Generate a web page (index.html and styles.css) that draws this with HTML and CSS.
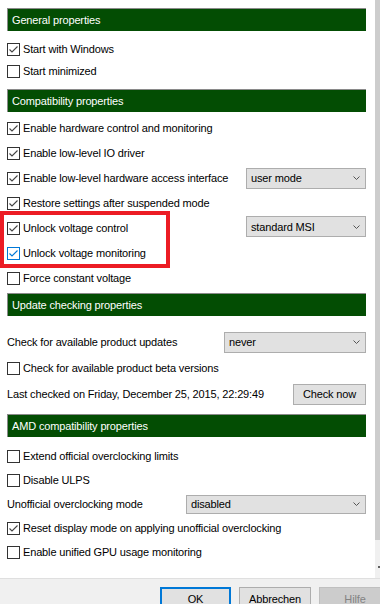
FILE: index.html
```html
<!DOCTYPE html>
<html lang="en">
<head>
    <meta charset="UTF-8">
    <meta name="viewport" content="width=device-width, initial-scale=1.0">
    <title>Properties</title>
    <link rel="stylesheet" href="styles.css">
</head>
<body>
    <div class="dialog">
        <div class="scroll-area">
            <div class="content">
                <div class="group-title">General properties</div>
                <div class="group group-general">
                    <div class="row"><span class="cb"><svg width="11" height="11" viewBox="0 0 11 11"><path d="M1.5 5.5 L4 8 L9.5 2.5" /></svg></span>Start with Windows</div>
                    <div class="row"><span class="cb"></span>Start minimized</div>
                </div>

                <div class="group-title">Compatibility properties</div>
                <div class="group group-compat">
                    <div class="row"><span class="cb"><svg width="11" height="11" viewBox="0 0 11 11"><path d="M1.5 5.5 L4 8 L9.5 2.5" /></svg></span>Enable hardware control and monitoring</div>
                    <div class="row"><span class="cb"><svg width="11" height="11" viewBox="0 0 11 11"><path d="M1.5 5.5 L4 8 L9.5 2.5" /></svg></span>Enable low-level IO driver</div>
                    <div class="row">
                        <span class="cb"><svg width="11" height="11" viewBox="0 0 11 11"><path d="M1.5 5.5 L4 8 L9.5 2.5" /></svg></span>
                        <span class="label">Enable low-level hardware access interface</span>
                        <div class="combo combo-small"><span>user mode</span><svg width="7" height="4" viewBox="0 0 7 4"><path d="M0.5 0.5 L3.5 3.5 L6.5 0.5" /></svg></div>
                    </div>
                    <div class="row"><span class="cb"><svg width="11" height="11" viewBox="0 0 11 11"><path d="M1.5 5.5 L4 8 L9.5 2.5" /></svg></span>Restore settings after suspended mode</div>
                    <div class="row">
                        <span class="cb"><svg width="11" height="11" viewBox="0 0 11 11"><path d="M1.5 5.5 L4 8 L9.5 2.5" /></svg></span>
                        <span class="label">Unlock voltage control</span>
                        <div class="combo combo-small combo-msi"><span>standard MSI</span><svg width="7" height="4" viewBox="0 0 7 4"><path d="M0.5 0.5 L3.5 3.5 L6.5 0.5" /></svg></div>
                    </div>
                    <div class="row"><span class="cb cb-hover"><svg width="11" height="11" viewBox="0 0 11 11"><path d="M1.5 5.5 L4 8 L9.5 2.5" /></svg></span>Unlock voltage monitoring</div>
                    <div class="row"><span class="cb"></span>Force constant voltage</div>
                </div>

                <div class="group-title">Update checking properties</div>
                <div class="group group-update">
                    <div class="row">
                        <span class="label">Check for available product updates</span>
                        <div class="combo combo-medium"><span>never</span><svg width="7" height="4" viewBox="0 0 7 4"><path d="M0.5 0.5 L3.5 3.5 L6.5 0.5" /></svg></div>
                    </div>
                    <div class="row"><span class="cb"></span>Check for available product beta versions</div>
                    <div class="row">
                        <span class="label">Last checked on Friday, December 25, 2015, 22:29:49</span>
                        <div class="button check-now">Check now</div>
                    </div>
                </div>

                <div class="group-title">AMD compatibility properties</div>
                <div class="group group-amd">
                    <div class="row"><span class="cb"></span>Extend official overclocking limits</div>
                    <div class="row"><span class="cb"></span>Disable ULPS</div>
                    <div class="row">
                        <span class="label">Unofficial overclocking mode</span>
                        <div class="combo combo-large"><span>disabled</span><svg width="7" height="4" viewBox="0 0 7 4"><path d="M0.5 0.5 L3.5 3.5 L6.5 0.5" /></svg></div>
                    </div>
                    <div class="row"><span class="cb"><svg width="11" height="11" viewBox="0 0 11 11"><path d="M1.5 5.5 L4 8 L9.5 2.5" /></svg></span>Reset display mode on applying unofficial overclocking</div>
                    <div class="row"><span class="cb"></span>Enable unified GPU usage monitoring</div>
                </div>

                <!-- red marker drawn over the voltage options -->
                <div class="highlight"></div>
            </div>
            <div class="scrollbar">
                <div class="thumb"></div>
                <div class="track"><span class="arrow"></span></div>
            </div>
        </div>
        <div class="buttons">
            <div class="button default">OK</div>
            <div class="button">Abbrechen</div>
            <div class="button disabled">Hilfe</div>
        </div>
    </div>
</body>
</html>
```

FILE: styles.css
```css
body {
    margin: 0;
    font-family: "Liberation Sans", Arial, sans-serif;
    font-size: 11px;
    letter-spacing: -0.15px;
    color: #000;
    background-color: #f0f0f0;
    overflow: hidden;
}

.dialog {
    width: 380px;
    height: 604px;
    display: flex;
    flex-direction: column;
}

.scroll-area {
    height: 578px;
    display: flex;
    border-bottom: 1px solid #dfdfdf;
    background-color: #fff;
    flex-shrink: 0;
}

.content {
    position: relative;
    width: 359px;
    padding: 8px 9px 0 7px;
}

.group-title {
    height: 22px;
    line-height: 22px;
    padding-left: 4px;
    background-color: #034d03;
    color: #fff;
    border-top: 1px solid #8a8a8a;
    border-left: 1px solid #8a8a8a;
}

.group {
    display: flex;
    flex-direction: column;
}

.group-general {
    gap: 2px;
    padding: 8px 0;
}

.group-compat {
    gap: 5px;
    padding: 6px 0 5px;
}

.group-update {
    gap: 6px;
    padding: 16px 0 10px;
}

.group-amd {
    gap: 4px;
    padding-top: 9px;
}

.row {
    height: 20px;
    display: flex;
    align-items: center;
    white-space: nowrap;
}

.row .label {
    flex: 1;
}

.cb {
    width: 11px;
    height: 11px;
    border: 1px solid #333;
    background-color: #fff;
    margin-right: 3px;
    flex-shrink: 0;
    display: flex;
}

.cb svg path {
    fill: none;
    stroke: #444;
    stroke-width: 1.1;
}

.cb-hover {
    border-color: #0078d7;
}

.cb-hover svg path {
    stroke: #0078d7;
}

.combo {
    height: 19px;
    box-sizing: border-box;
    border: 1px solid #adadad;
    background-color: #e1e1e1;
    display: flex;
    align-items: center;
    justify-content: space-between;
    padding: 0 5px 0 4px;
}

.combo svg path {
    fill: none;
    stroke: #555;
}

.combo-small {
    width: 120px;
    height: 21px;
}

.combo-msi {
    margin-top: -3px;
}

.combo-medium {
    width: 142px;
    height: 21px;
}

.combo-large {
    width: 180px;
}

.button {
    box-sizing: border-box;
    height: 21px;
    border: 1px solid #adadad;
    background-color: #e1e1e1;
    display: flex;
    align-items: center;
    justify-content: center;
}

.check-now {
    width: 73px;
}

.highlight {
    position: absolute;
    left: 0;
    top: 211px;
    width: 162px;
    height: 49px;
    border: 4px solid #ec1c24;
}

.scrollbar {
    width: 5px;
    margin-left: auto;
    display: flex;
    flex-direction: column;
}

.thumb {
    height: 540px;
    background-color: #cdcdcd;
}

.track {
    flex: 1;
    background-color: #f0f0f0;
    position: relative;
}

.track .arrow {
    position: absolute;
    top: 26px;
    left: 3px;
    width: 2px;
    height: 2px;
    background-color: #606060;
}

.buttons {
    display: flex;
    gap: 8px;
    padding: 8px 0 0 160px;
}

.buttons .button {
    width: 72px;
    height: 23px;
    flex-shrink: 0;
}

.buttons .default {
    width: 71px;
    border: 2px solid #0078d7;
}

.buttons .disabled {
    background-color: #cccccc;
    border-color: #bfbfbf;
    color: #838383;
}
```
